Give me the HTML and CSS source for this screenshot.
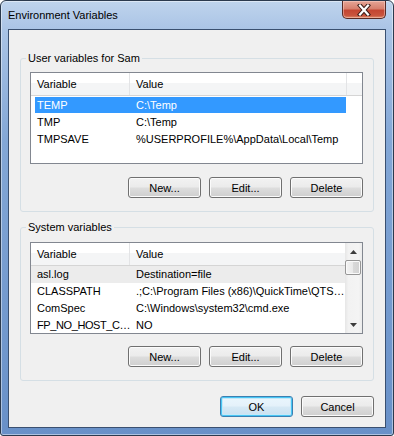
FILE: index.html
```html
<!DOCTYPE html>
<html lang="en">
<head>
    <meta charset="UTF-8">
    <title>Environment Variables</title>
    <link rel="stylesheet" href="styles.css">
</head>
<body>
    <div class="window">
        <div class="titlebar">
            <span class="title">Environment Variables</span>
            <div class="close-btn">
                <svg width="14" height="12" viewBox="0 0 14 12">
                    <path d="M3 1.5 L11 10.5 M11 1.5 L3 10.5" stroke="#3b1d18" stroke-width="4.2" stroke-linecap="square" fill="none"/>
                    <path d="M3 1.5 L11 10.5 M11 1.5 L3 10.5" stroke="#fff" stroke-width="2.2" stroke-linecap="square" fill="none"/>
                </svg>
            </div>
        </div>

        <div class="client">
            <fieldset class="group group-user">
                <legend>User variables for Sam</legend>
                <div class="listview">
                    <div class="lv-main">
                        <div class="lv-head">
                            <div class="hcell col-var">Variable</div>
                            <div class="hcell col-val">Value</div>
                            <div class="hcell col-fill"></div>
                        </div>
                        <div class="lv-rows">
                            <div class="lv-row selected"><span class="cell col-var">TEMP</span><span class="cell col-val">C:\Temp</span></div>
                            <div class="lv-row"><span class="cell col-var">TMP</span><span class="cell col-val">C:\Temp</span></div>
                            <div class="lv-row"><span class="cell col-var">TMPSAVE</span><span class="cell col-val">%USERPROFILE%\AppData\Local\Temp</span></div>
                        </div>
                    </div>
                </div>
                <div class="btn-row">
                    <button class="btn">New...</button>
                    <button class="btn">Edit...</button>
                    <button class="btn">Delete</button>
                </div>
            </fieldset>

            <fieldset class="group group-system">
                <legend>System variables</legend>
                <div class="listview">
                    <div class="lv-main">
                        <div class="lv-head">
                            <div class="hcell col-var">Variable</div>
                            <div class="hcell col-val">Value</div>
                        </div>
                        <div class="lv-rows">
                            <div class="lv-row hot"><span class="cell col-var">asl.log</span><span class="cell col-val">Destination=file</span></div>
                            <div class="lv-row"><span class="cell col-var">CLASSPATH</span><span class="cell col-val">.;C:\Program Files (x86)\QuickTime\QTS…</span></div>
                            <div class="lv-row"><span class="cell col-var">ComSpec</span><span class="cell col-val">C:\Windows\system32\cmd.exe</span></div>
                            <div class="lv-row"><span class="cell col-var tight">FP_NO_HOST_C…</span><span class="cell col-val">NO</span></div>
                        </div>
                    </div>
                    <div class="scrollbar">
                        <div class="sb-arrow">
                            <svg width="7" height="4" viewBox="0 0 7 4"><polygon points="0,4 3.5,0 7,4" fill="#3d3d3d"/></svg>
                        </div>
                        <div class="sb-track">
                            <div class="sb-thumb"></div>
                        </div>
                        <div class="sb-arrow">
                            <svg width="7" height="4" viewBox="0 0 7 4"><polygon points="0,0 3.5,4 7,0" fill="#3d3d3d"/></svg>
                        </div>
                    </div>
                </div>
                <div class="btn-row">
                    <button class="btn">New...</button>
                    <button class="btn">Edit...</button>
                    <button class="btn">Delete</button>
                </div>
            </fieldset>

            <div class="dialog-btns">
                <button class="btn btn-default">OK</button>
                <button class="btn">Cancel</button>
            </div>
        </div>
    </div>
</body>
</html>
```

FILE: styles.css
```css
body {
    margin: 0;
    font-family: "Liberation Sans", Arial, sans-serif;
    font-size: 11px;
    color: #000;
    background-color: #fff;
}
.window {
    width: 394px;
    height: 436px;
    box-sizing: border-box;
    display: flex;
    flex-direction: column;
    padding: 0 7px 7px 7px;
    border: 1px solid #2b3a4e;
    border-radius: 6px 6px 3px 3px;
    background: linear-gradient(180deg, #bfd4ed 0px, #a9c3e5 30px, #83a7d6 140px, #6890c8 436px);
    box-shadow: inset 0 0 0 1px rgba(255, 255, 255, 0.45);
}
.titlebar {
    height: 28px;
    display: flex;
    align-items: flex-start;
}
.title {
    margin-top: 7px;
    line-height: 14px;
    color: #000;
}
.close-btn {
    margin-left: auto;
    width: 44px;
    height: 18px;
    box-sizing: border-box;
    border: 1px solid #582a24;
    border-top: none;
    border-radius: 0 0 5px 5px;
    display: flex;
    align-items: center;
    justify-content: center;
    background: linear-gradient(180deg, #e6a596 0%, #d7806e 45%, #c44632 55%, #c9543d 85%, #de8c6c 100%);
    box-shadow: inset 0 0 0 1px rgba(255, 220, 210, 0.45);
}
.client {
    flex: 1;
    background-color: #f0f0f0;
    border: 1px solid #3a5070;
    padding: 20px 11px 0 11px;
}
.group {
    margin: 0;
    padding: 6px 10px 13px 9px;
    border: 1px solid #d5dfe5;
    border-radius: 3px;
    min-width: 0;
}
.group legend {
    padding: 0 2px;
    margin-left: -4px;
    line-height: 16px;
}
.group-system {
    margin-top: 7px;
    padding-top: 7px;
}
.group-system .btn-row {
    margin-top: 12px;
}
.listview {
    height: 92px;
    box-sizing: border-box;
    border: 1px solid #828790;
    background-color: #fff;
    display: flex;
    overflow: hidden;
}
.lv-main {
    flex: 1;
    min-width: 0;
    overflow: hidden;
}
.lv-head {
    display: flex;
    height: 22px;
    border-bottom: 1px solid #d5d5d5;
    background: linear-gradient(180deg, #ffffff 0%, #ffffff 45%, #f4f5f6 45%, #f4f5f6 100%);
}
.hcell {
    box-sizing: border-box;
    line-height: 22px;
    padding-left: 6px;
    border-right: 1px solid #e3e4e6;
}
.col-var {
    width: 99px;
    flex: none;
}
.col-val {
    width: 217px;
    flex: none;
}
.col-fill {
    flex: 1;
    border-right: none;
}
.group-user .lv-rows {
    padding-top: 1px;
}
.lv-row {
    display: flex;
    width: 316px;
    height: 17px;
    line-height: 17px;
}
.cell {
    box-sizing: border-box;
    padding-left: 6px;
    white-space: nowrap;
    overflow: hidden;
}
.cell.tight {
    letter-spacing: -0.4px;
}
.lv-row.selected {
    width: 311px;
    margin-left: 4px;
    line-height: 16px;
    background: linear-gradient(#3399ff, #3399ff) 0 0 / 100% 16px no-repeat;
    color: #fff;
}
.lv-row.selected .col-var {
    width: 95px;
    padding-left: 2px;
}
.lv-row.hot {
    background-color: #ececec;
}
.scrollbar {
    width: 17px;
    flex: none;
    display: flex;
    flex-direction: column;
    background: linear-gradient(90deg, #e6e6e6 0%, #f2f2f2 20%, #f4f4f4 80%, #ebebeb 100%);
}
.sb-arrow {
    height: 17px;
    flex: none;
    display: flex;
    align-items: center;
    justify-content: center;
}
.sb-track {
    flex: 1;
}
.sb-thumb {
    height: 15px;
    margin: 0 1px 0 0;
    box-sizing: border-box;
    border: 1px solid #969696;
    border-radius: 2px;
    background: linear-gradient(90deg, #f3f3f3 0%, #e9e9e9 50%, #d9d9d9 50%, #d2d2d2 100%);
    box-shadow: inset 0 0 0 1px #fafafa;
}
.btn-row,
.dialog-btns {
    display: flex;
    justify-content: flex-end;
    gap: 8px;
    margin-top: 13px;
}
.dialog-btns {
    margin-top: 15px;
}
.btn {
    width: 73px;
    height: 21px;
    padding: 0;
    font-family: inherit;
    font-size: 11px;
    color: #000;
    border: 1px solid #707070;
    border-radius: 3px;
    background: linear-gradient(180deg, #f2f2f2 0%, #ebebeb 48%, #dddddd 52%, #cfcfcf 100%);
    box-shadow: inset 0 0 0 1px #fbfbfb;
}
.btn-default {
    border-color: #3c7fb1;
    box-shadow: inset 0 0 0 1px #48c6f4, inset 0 0 0 2px #c4e8f9;
    background: linear-gradient(180deg, #eaf6fd 0%, #e4f1fa 48%, #d6e9f5 52%, #c9e0f0 100%);
}
```
